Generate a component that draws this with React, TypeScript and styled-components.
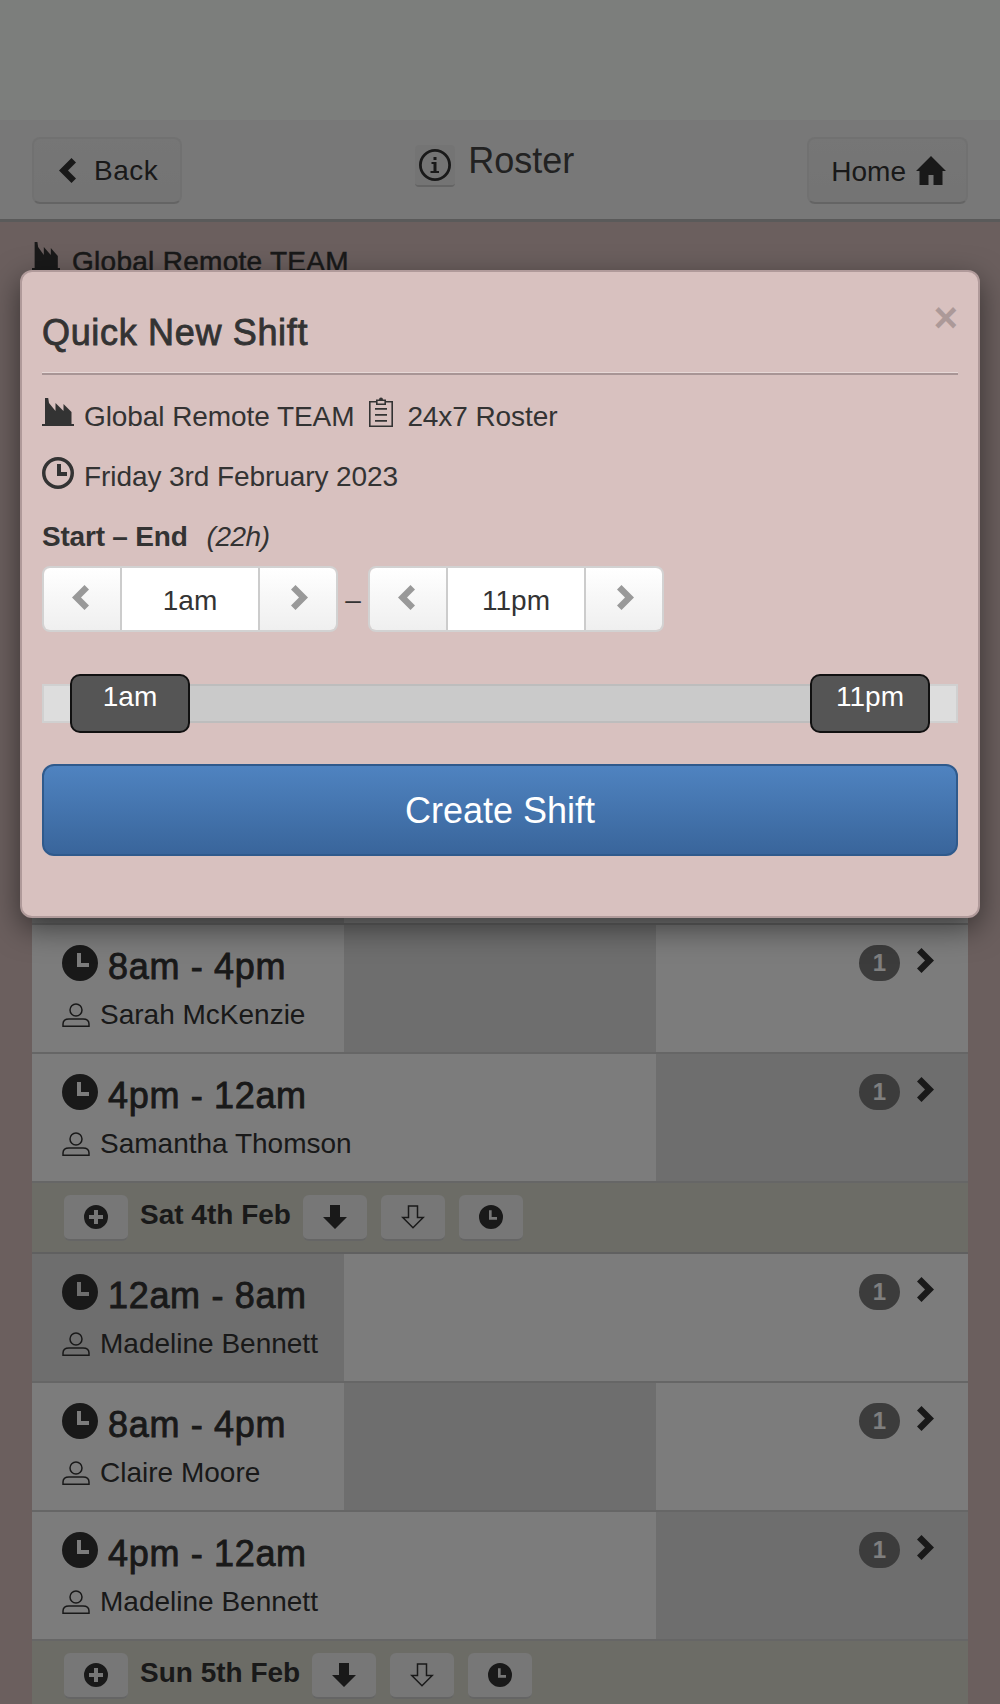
import React from "react";
import styled, { createGlobalStyle, css } from "styled-components";

const Global = createGlobalStyle`
  html, body { margin: 0; padding: 0; background: #d6bfbd; }
  * { box-sizing: border-box; }
  body { font-family: "Liberation Sans", Arial, sans-serif; font-size: 28px; line-height: 40px; color: #333; }
`;

const medium = css`
  -webkit-text-stroke: 0.85px currentColor;
  letter-spacing: 0.67px;
`;

const Page = styled.div`
  height: 1704px;
  overflow: hidden;
  position: relative;
  background: #d6bfbd;
`;
const TopBand = styled.div`
  height: 120px;
  background: #f9fcf9;
`;
const NavBar = styled.header`
  height: 102px;
  padding: 17px 32px 0;
  display: flex;
  justify-content: space-between;
  align-items: flex-start;
  background: #f0f0f0;
  border-bottom: 3px solid #b4b4b4;
`;
const NavButton = styled.button<{ $pad: string; $gap: number }>`
  height: 67px;
  padding: ${(p) => p.$pad};
  display: flex;
  align-items: center;
  gap: ${(p) => p.$gap}px;
  font: inherit;
  color: #333;
  background: linear-gradient(#ececec, #e8e8e8);
  border: 2px solid #e2e2e2;
  border-bottom-color: #c8c8c8;
  border-radius: 8px;
`;
const BackLabel = styled.span`
  letter-spacing: 0.5px;
`;
const NavLabel = styled.span`
  padding-top: 2px;
`;
const NavTitle = styled.div`
  display: flex;
  align-items: flex-start;
  gap: 12px;
  margin-top: 8px;
  font-size: 36px;
  color: #444;
`;
const InfoButton = styled.span`
  width: 40px;
  height: 42px;
  display: flex;
  align-items: center;
  justify-content: center;
  background: #e9e9e9;
  border-radius: 4px;
  border-bottom: 2px solid #c8c8c8;
`;
const RosterText = styled.span`
  line-height: 32px;
  margin-left: 1px;
`;
const SiteTitle = styled.div`
  display: flex;
  align-items: flex-start;
  gap: 12px;
  padding: 20px 32px 0;
  height: 503px;
  -webkit-text-stroke: 0.5px currentColor;
  letter-spacing: 0.28px;
`;
const List = styled.section`
  margin: 0 32px;
`;
const DayHeader = styled.div`
  height: 71px;
  padding: 12px 32px 0;
  display: flex;
  align-items: flex-start;
  gap: 14px;
  background: #d8d9cd;
  border-bottom: 2px solid #c0c0c0;
`;
const DayName = styled.span`
  font-weight: 700;
  margin: 0 -2px;
`;
const DayButton = styled.button`
  width: 64px;
  height: 46px;
  padding: 0;
  display: flex;
  align-items: center;
  justify-content: center;
  background: #eeeeee;
  border: none;
  border-bottom: 2px solid #cbcbcb;
  border-radius: 6px;
`;
const ShiftRow = styled.div<{ $shade: number }>`
  height: 129px;
  padding: 20px 34px 0 30px;
  display: flex;
  justify-content: space-between;
  align-items: flex-start;
  background-color: #f9f9f9;
  border-bottom: 2px solid #cccccc;
  background-image: linear-gradient(#dcdcdc, #dcdcdc);
  background-repeat: no-repeat;
  background-size: 33.333% 100%;
  background-position: ${(p) => p.$shade * 50}% 0;
`;
const ShiftInfo = styled.div`
  display: flex;
  flex-direction: column;
  gap: 6px;
`;
const ShiftTime = styled.div`
  display: flex;
  align-items: flex-start;
  gap: 10px;
  font-size: 36px;
  line-height: 44px;
  ${medium}
  color: #333;
`;
const ShiftPerson = styled.div`
  display: flex;
  align-items: center;
  gap: 10px;
`;
const ShiftMeta = styled.div`
  display: flex;
  align-items: flex-start;
  gap: 17px;
  & > svg {
    margin-top: 3px;
  }
`;
const Badge = styled.span`
  width: 41px;
  height: 36px;
  display: flex;
  align-items: center;
  justify-content: center;
  border-radius: 18px;
  background: #787878;
  color: #ffffff;
  font-size: 24px;
  font-weight: 700;
`;
const Overlay = styled.div`
  position: absolute;
  inset: 0;
  background: rgba(0, 0, 0, 0.5);
`;
const Modal = styled.div`
  position: absolute;
  left: 20px;
  top: 270px;
  width: 960px;
  padding: 0 20px 60px;
  background: #d8c1bf;
  border: 2px solid #b09a9a;
  border-radius: 12px;
  box-shadow: 0 10px 30px rgba(0, 0, 0, 0.5);
`;
const ModalHeader = styled.div`
  position: relative;
  padding: 41px 0 20px;
  border-bottom: 2px solid #a89595;
  box-shadow: inset 0 -1px 0 #e6d8d6;
`;
const ModalTitle = styled.h4`
  margin: 0;
  font-size: 36px;
  line-height: 40px;
  font-weight: 400;
  ${medium}
  color: #333;
`;
const CloseButton = styled.span`
  position: absolute;
  right: 0;
  top: 26px;
  font-size: 42px;
  line-height: 40px;
  font-weight: 700;
  color: #000;
  opacity: 0.2;
`;
const InfoLine = styled.div`
  display: flex;
  align-items: center;
  gap: 10px;
  margin-top: 20px;
  letter-spacing: -0.08px;
`;
const FirstLine = styled(InfoLine)`
  margin-top: 22px;
`;
const LineIcon = styled.span`
  display: flex;
  margin-top: -8px;
`;
const FactoryIcon = styled(LineIcon)`
  margin-top: -10px;
`;
const ClipIcon = styled(LineIcon)`
  margin: -11px 4px 0 5px;
`;
const Strong = styled.strong`
  font-weight: 700;
  letter-spacing: -0.2px;
`;
const Muted = styled.em`
  margin-left: 19px;
  letter-spacing: -0.5px;
`;
const TimeLabel = styled.div`
  margin-top: 20px;
`;
const StepperRow = styled.div`
  margin-top: 9px;
  display: flex;
  align-items: center;
`;
const Dash = styled.span`
  width: 30px;
  padding-top: 2px;
  text-align: center;
`;
const Stepper = styled.div`
  width: 296px;
  height: 66px;
  display: grid;
  grid-template-columns: 76px 1fr 76px;
  border: 2px solid #d2d2d2;
  border-radius: 8px;
  overflow: hidden;
`;
const StepButton = styled.span<{ $dir: "prev" | "next" }>`
  display: flex;
  align-items: center;
  justify-content: center;
  background: linear-gradient(#ffffff, #efefef);
  padding: 0 ${(p) => (p.$dir === "prev" ? "4px" : "0")} 4px ${(p) => (p.$dir === "next" ? "3px" : "0")};
`;
const StepValue = styled.span`
  display: flex;
  align-items: center;
  justify-content: center;
  padding-top: 4px;
  background: #ffffff;
  border-left: 2px solid #cccccc;
  border-right: 2px solid #cccccc;
`;
const Slider = styled.div`
  position: relative;
  margin-top: 52px;
  height: 39px;
  background: #dddddd;
  border: 2px solid #d0d0d0;
`;
const SliderRange = styled.div`
  position: absolute;
  left: 28px;
  right: 28px;
  top: -2px;
  bottom: -2px;
  background: #cacaca;
  border-top: 2px solid #bdbdbd;
  border-bottom: 2px solid #bdbdbd;
`;
const SliderHandle = styled.div<{ $side: "left" | "right" }>`
  position: absolute;
  ${(p) => p.$side}: 26px;
  top: -12px;
  width: 120px;
  height: 59px;
  background: #555555;
  border: 2px solid #111111;
  border-radius: 10px;
  color: #ffffff;
  text-align: center;
  line-height: 42px;
`;
const CreateButton = styled.button`
  display: block;
  width: 100%;
  height: 92px;
  margin-top: 41px;
  padding: 2px 0 0;
  font: inherit;
  font-size: 36px;
  color: #ffffff;
  background: linear-gradient(#4f83c0, #39659b);
  border: 2px solid #2f5a8c;
  border-radius: 12px;
`;

const Fill = styled.svg<{ $color?: string }>`
  display: block;
  flex: none;
  fill: ${(p) => p.$color ?? "#333"};
`;

const Factory = ({ w = 32 }: { w?: number }) => (
  <Fill width={w} height={28} viewBox="0 0 32 28" preserveAspectRatio="none">
    <path d="M0 28v-2h3V0h3.200l.8 5 6.500 8V5l8 8V6l8 8v12H32v2z" />
  </Fill>
);
const Clipboard = () => (
  <Fill width={24} height={31} viewBox="0 0 24 31">
    <path
      fillRule="evenodd"
      d="M7 3.500h3a2 2 0 0 1 4 0h3V5h7v26H0V5h7zM1.600 6.600v22.800h20.800V6.600H17V9H7V6.600zM8.600 5.100v2.300h6.800V5.100zM6 12h12v1.700H6zM6 18h12v1.700H6zM6 24h12v1.700H6z"
    />
  </Fill>
);
const ClockOutline = () => (
  <Fill width={32} height={32} viewBox="0 0 32 32">
    <path
      fillRule="evenodd"
      d="M16 0a16 16 0 1 0 0 32a16 16 0 1 0 0-32zM16 3.500a12.500 12.500 0 1 1 0 25a12.500 12.500 0 1 1 0-25zM15 7h4v8h6v4H15z"
    />
  </Fill>
);
const ClockSolid = ({ size = 36 }: { size?: number }) => (
  <Fill width={size} height={size} viewBox="0 0 36 36" $color="#333">
    <path
      fillRule="evenodd"
      d="M18 0a18 18 0 1 0 0 36a18 18 0 1 0 0-36zM15 8h4v10h8v4H15z"
    />
  </Fill>
);
const Person = () => (
  <svg width={28} height={24} viewBox="0 0 28 24" fill="none" stroke="#333" strokeWidth={1.5}>
    <circle cx={14} cy={7} r={6} />
    <path d="M1 23.200v-2.200q0-5 6-5h14q6 0 6 5v2.200z" />
  </svg>
);
const ChevronLeft = ({ color = "#333" }: { color?: string }) => (
  <Fill width={17} height={25} viewBox="0 0 17 25" $color={color}>
    <path d="M12.500 0L17 4.500 9 12.500l8 8L12.500 25 0 12.500z" />
  </Fill>
);
const ChevronRight = ({ color = "#333" }: { color?: string }) => (
  <Fill width={17} height={25} viewBox="0 0 17 25" $color={color}>
    <path d="M4.500 0L0 4.500 8 12.500l-8 8L4.500 25 17 12.500z" />
  </Fill>
);
const Home = () => (
  <Fill width={30} height={29} viewBox="0 0 30 29">
    <path d="M15 0l15 15h-3.500v14h-9V19h-5v10h-9V15H0z" />
  </Fill>
);
const InfoCircle = () => (
  <Fill width={32} height={32} viewBox="0 0 32 32">
    <path
      fillRule="evenodd"
      d="M16 0a16 16 0 1 0 0 32a16 16 0 1 0 0-32zM16 2.800a13.200 13.200 0 1 1 0 26.400a13.200 13.200 0 1 1 0-26.400zM14.500 8h3v3h-3zM12.500 13h5v9h2.500v2h-8.500v-2h3v-7h-2z"
    />
  </Fill>
);
const Plus = () => (
  <Fill width={24} height={24} viewBox="0 0 24 24">
    <path
      fillRule="evenodd"
      d="M12 0a12 12 0 1 0 0 24a12 12 0 1 0 0-24zM10 5h4v5h5v4h-5v5h-4v-5H5v-4h5z"
    />
  </Fill>
);
const ArrowSolid = () => (
  <Fill width={24} height={24} viewBox="0 0 24 24">
    <path d="M7 0h10v12h7L12 24 0 12h7z" />
  </Fill>
);
const ArrowOutline = () => (
  <svg width={24} height={24} viewBox="0 0 24 24" fill="none" stroke="#333" strokeWidth={1.5}>
    <path d="M7.500 1h9v11.500h5.700L12 22.800 1.800 12.500h5.700z" />
  </svg>
);

const Day = ({ label }: { label: string }) => (
  <DayHeader>
    <DayButton>
      <Plus />
    </DayButton>
    <DayName>{label}</DayName>
    <DayButton>
      <ArrowSolid />
    </DayButton>
    <DayButton>
      <ArrowOutline />
    </DayButton>
    <DayButton>
      <ClockSolid size={24} />
    </DayButton>
  </DayHeader>
);

const Shift = ({ time, name, shade }: { time: string; name: string; shade: number }) => (
  <ShiftRow $shade={shade}>
    <ShiftInfo>
      <ShiftTime>
        <ClockSolid />
        {time}
      </ShiftTime>
      <ShiftPerson>
        <Person />
        {name}
      </ShiftPerson>
    </ShiftInfo>
    <ShiftMeta>
      <Badge>1</Badge>
      <ChevronRight />
    </ShiftMeta>
  </ShiftRow>
);

const Time = ({ value }: { value: string }) => (
  <Stepper>
    <StepButton $dir="prev">
      <ChevronLeft color="#999" />
    </StepButton>
    <StepValue>{value}</StepValue>
    <StepButton $dir="next">
      <ChevronRight color="#999" />
    </StepButton>
  </Stepper>
);

export default function App() {
  return (
    <Page>
      <Global />
      <TopBand />
      <NavBar>
        <NavButton $pad="0 22px 0 25px" $gap={18}>
          <ChevronLeft />
          <BackLabel>Back</BackLabel>
        </NavButton>
        <NavTitle>
          <InfoButton>
            <InfoCircle />
          </InfoButton>
          <RosterText>Roster</RosterText>
        </NavTitle>
        <NavButton $pad="0 20px 0 22px" $gap={10}>
          <NavLabel>Home</NavLabel>
          <Home />
        </NavButton>
      </NavBar>
      <SiteTitle>
        <Factory w={28} />
        Global Remote TEAM
      </SiteTitle>
      <List>
        <Day label="Fri 3rd Feb" />
        <Shift time="12am - 8am" name="Claire Moore" shade={0} />
        <Shift time="8am - 4pm" name="Sarah McKenzie" shade={1} />
        <Shift time="4pm - 12am" name="Samantha Thomson" shade={2} />
        <Day label="Sat 4th Feb" />
        <Shift time="12am - 8am" name="Madeline Bennett" shade={0} />
        <Shift time="8am - 4pm" name="Claire Moore" shade={1} />
        <Shift time="4pm - 12am" name="Madeline Bennett" shade={2} />
        <Day label="Sun 5th Feb" />
      </List>
      <Overlay />
      <Modal>
        <ModalHeader>
          <ModalTitle>Quick New Shift</ModalTitle>
          <CloseButton>×</CloseButton>
        </ModalHeader>
        <FirstLine>
          <FactoryIcon>
            <Factory />
          </FactoryIcon>
          <span>Global Remote TEAM</span>
          <ClipIcon>
            <Clipboard />
          </ClipIcon>
          24x7 Roster
        </FirstLine>
        <InfoLine>
          <LineIcon>
            <ClockOutline />
          </LineIcon>
          Friday 3rd February 2023
        </InfoLine>
        <TimeLabel>
          <Strong>Start – End</Strong>
          <Muted>(22h)</Muted>
        </TimeLabel>
        <StepperRow>
          <Time value="1am" />
          <Dash>–</Dash>
          <Time value="11pm" />
        </StepperRow>
        <Slider>
          <SliderRange />
          <SliderHandle $side="left">1am</SliderHandle>
          <SliderHandle $side="right">11pm</SliderHandle>
        </Slider>
        <CreateButton>Create Shift</CreateButton>
      </Modal>
    </Page>
  );
}
